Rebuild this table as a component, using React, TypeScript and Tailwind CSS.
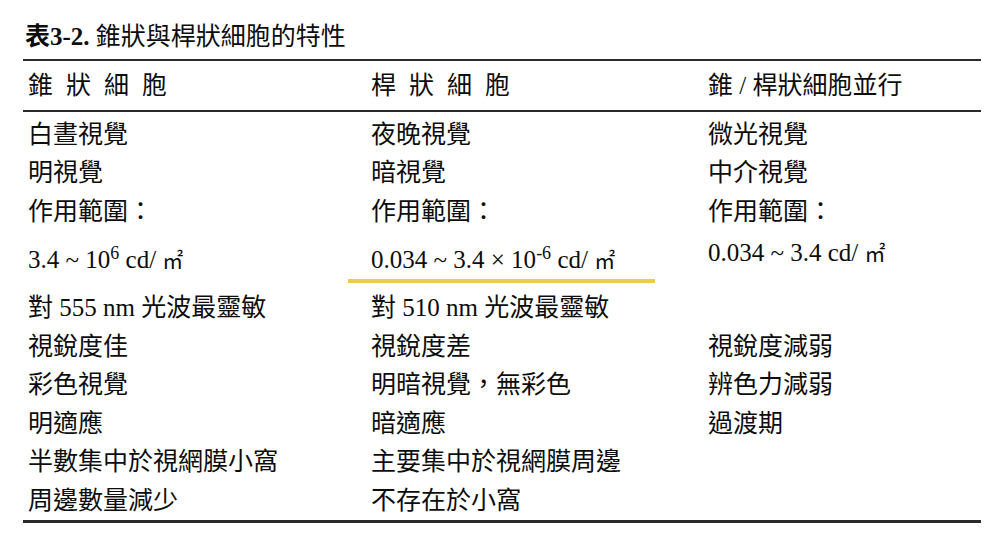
import React from 'react';

type Row = { a: React.ReactNode; b: React.ReactNode; c: React.ReactNode; tall?: boolean };

// square metre sign is narrower in the source document
const M2 = () => <span className="text-[21px]">㎡</span>;

const rows: Row[] = [
  { a: '白晝視覺', b: '夜晚視覺', c: '微光視覺' },
  { a: '明視覺', b: '暗視覺', c: '中介視覺' },
  { a: '作用範圍：', b: '作用範圍：', c: '作用範圍：' },
  {
    tall: true,
    a: (
      <span>
        3.4 ~ 10<sup className="text-[18px]">6</sup> cd/ <M2 />
      </span>
    ),
    b: (
      <span>
        0.034 ~ 3.4 × 10<sup className="text-[18px]">-6</sup> cd/ <M2 />
      </span>
    ),
    c: (
      <span>
        0.034 ~ 3.4 cd/ <M2 />
      </span>
    ),
  },
  { a: '對 555 nm 光波最靈敏', b: '對 510 nm 光波最靈敏', c: '' },
  { a: '視銳度佳', b: '視銳度差', c: '視銳度減弱' },
  { a: '彩色視覺', b: '明暗視覺，無彩色', c: '辨色力減弱' },
  { a: '明適應', b: '暗適應', c: '過渡期' },
  { a: '半數集中於視網膜小窩', b: '主要集中於視網膜周邊', c: '' },
  { a: '周邊數量減少', b: '不存在於小窩', c: '' },
];

export default function App() {
  return (
    <div className="w-[1000px] h-[535px] bg-white text-[#0d0d0d] font-['Liberation_Serif','Noto_Sans_CJK_TC',serif] text-[25px] overflow-hidden">
      <div className="pl-[25px] pt-[22px] h-[52px] leading-[30px] mb-[7px]">
        <span className="font-bold">表3-2.</span> 錐狀與桿狀細胞的特性
      </div>

      <div className="ml-[23px] w-[958px]">
        <div className="border-t-2 border-b-2 border-[#2a2a2a] grid grid-cols-[343px_337px_1fr] h-[53px] items-center">
          <div className="pl-[5px] tracking-[13px]">錐狀細胞</div>
          <div className="pl-[5px] tracking-[13px]">桿狀細胞</div>
          <div className="pl-[5px]">錐 / 桿狀細胞並行</div>
        </div>

        <div className="pt-[3px] border-b-[3px] border-[#2a2a2a]">
          {rows.map((r, i) => (
            <div
              key={i}
              className={`grid grid-cols-[343px_337px_1fr] items-center ${r.tall ? 'h-[58px]' : 'h-[38.5px]'}`}
            >
              <div className="pl-[5px] whitespace-nowrap">{r.a}</div>
              <div className="pl-[5px] whitespace-nowrap relative">
                {r.b}
                {r.tall ? (
                  <div className="absolute left-[-18px] top-[38px] w-[307px] h-[4px] bg-[#efcb48]" />
                ) : null}
              </div>
              <div className={`pl-[5px] whitespace-nowrap ${r.tall ? 'mb-[14px]' : ''}`}>{r.c}</div>
            </div>
          ))}
        </div>
      </div>
    </div>
  );
}
